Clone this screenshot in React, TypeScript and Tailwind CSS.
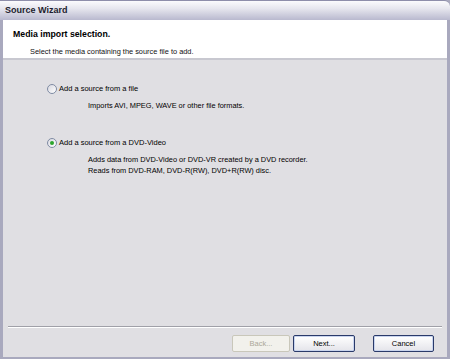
import React from "react";

const font = { fontFamily: '"Liberation Sans", Arial, sans-serif' };

function Radio({ checked }: { checked?: boolean }) {
  return (
    <span className="relative inline-flex h-[10px] w-[10px] items-center justify-center rounded-full border border-[#7f8ba3] bg-[linear-gradient(135deg,#d8d8e0,#ffffff)]">
      {checked && <span className="h-[4px] w-[4px] rounded-full bg-[#2ca52c]" />}
    </span>
  );
}

function Btn({ children, disabled }: { children: React.ReactNode; disabled?: boolean }) {
  return (
    <div
      className={
        "flex h-[17px] items-center justify-center rounded-[2px] border text-[7.5px] " +
        (disabled
          ? "border-[#c9c7ba] bg-[#f2f1ec] text-[#aca899]"
          : "border-[#2a3a6a] bg-[linear-gradient(#ffffff,#e4e4ea)] text-black shadow-[inset_0_0_0_1px_#c9d4ee]")
      }
    >
      {children}
    </div>
  );
}

export default function App() {
  return (
    <div style={font} className="flex h-[359px] w-[450px] flex-col bg-[#a9a9be]">
      <div className="flex h-[20px] items-center rounded-tr-[6px] border-t border-[#8e8eaa] bg-[linear-gradient(#fbfbfd,#e6e6ee_40%,#b9b9cf)] pl-[5px] text-[9px] font-bold text-[#1d1d2e]">
        Source Wizard
      </div>
      <div className="flex flex-1 flex-col border-l-[3px] border-r-[3px] border-b-[2px] border-[#a9a9be] bg-[#e0dfe3]">
        <div className="flex h-[40px] flex-col border-b-2 border-[#c8c8d0] bg-white pl-[10px]">
          <div className="mt-[8px] text-[8.75px] font-bold text-black">Media import selection.</div>
          <div className="mt-[5px] pl-[17px] text-[7.4px] text-[#111]">Select the media containing the source file to add.</div>
        </div>
        <div className="flex flex-1 flex-col pl-[44px] pt-[23px] text-[7.5px] text-black">
          <div className="flex items-center gap-[2px]">
            <Radio />
            <span>Add a source from a file</span>
          </div>
          <div className="mt-[6px] pl-[41px] text-[7.4px]">Imports AVI, MPEG, WAVE or other file formats.</div>
          <div className="mt-[26px] flex items-center gap-[2px]">
            <Radio checked />
            <span>Add a source from a DVD-Video</span>
          </div>
          <div className="mt-[5px] pl-[41px] text-[7.4px] leading-[11px]">
            <div>Adds data from DVD-Video or DVD-VR created by a DVD recorder.</div>
            <div>Reads from DVD-RAM, DVD-R(RW), DVD+R(RW) disc.</div>
          </div>
        </div>
        <div className="mx-[5px] border-t border-b border-t-[#a0a0a8] border-b-white" />
        <div className="flex h-[29px] items-center justify-end pr-[13px] pt-[2px]">
          <div className="w-[58px]"><Btn disabled>Back...</Btn></div>
          <div className="ml-[3px] w-[62px]"><Btn>Next...</Btn></div>
          <div className="ml-[18px] w-[61px]"><Btn>Cancel</Btn></div>
        </div>
      </div>
    </div>
  );
}
